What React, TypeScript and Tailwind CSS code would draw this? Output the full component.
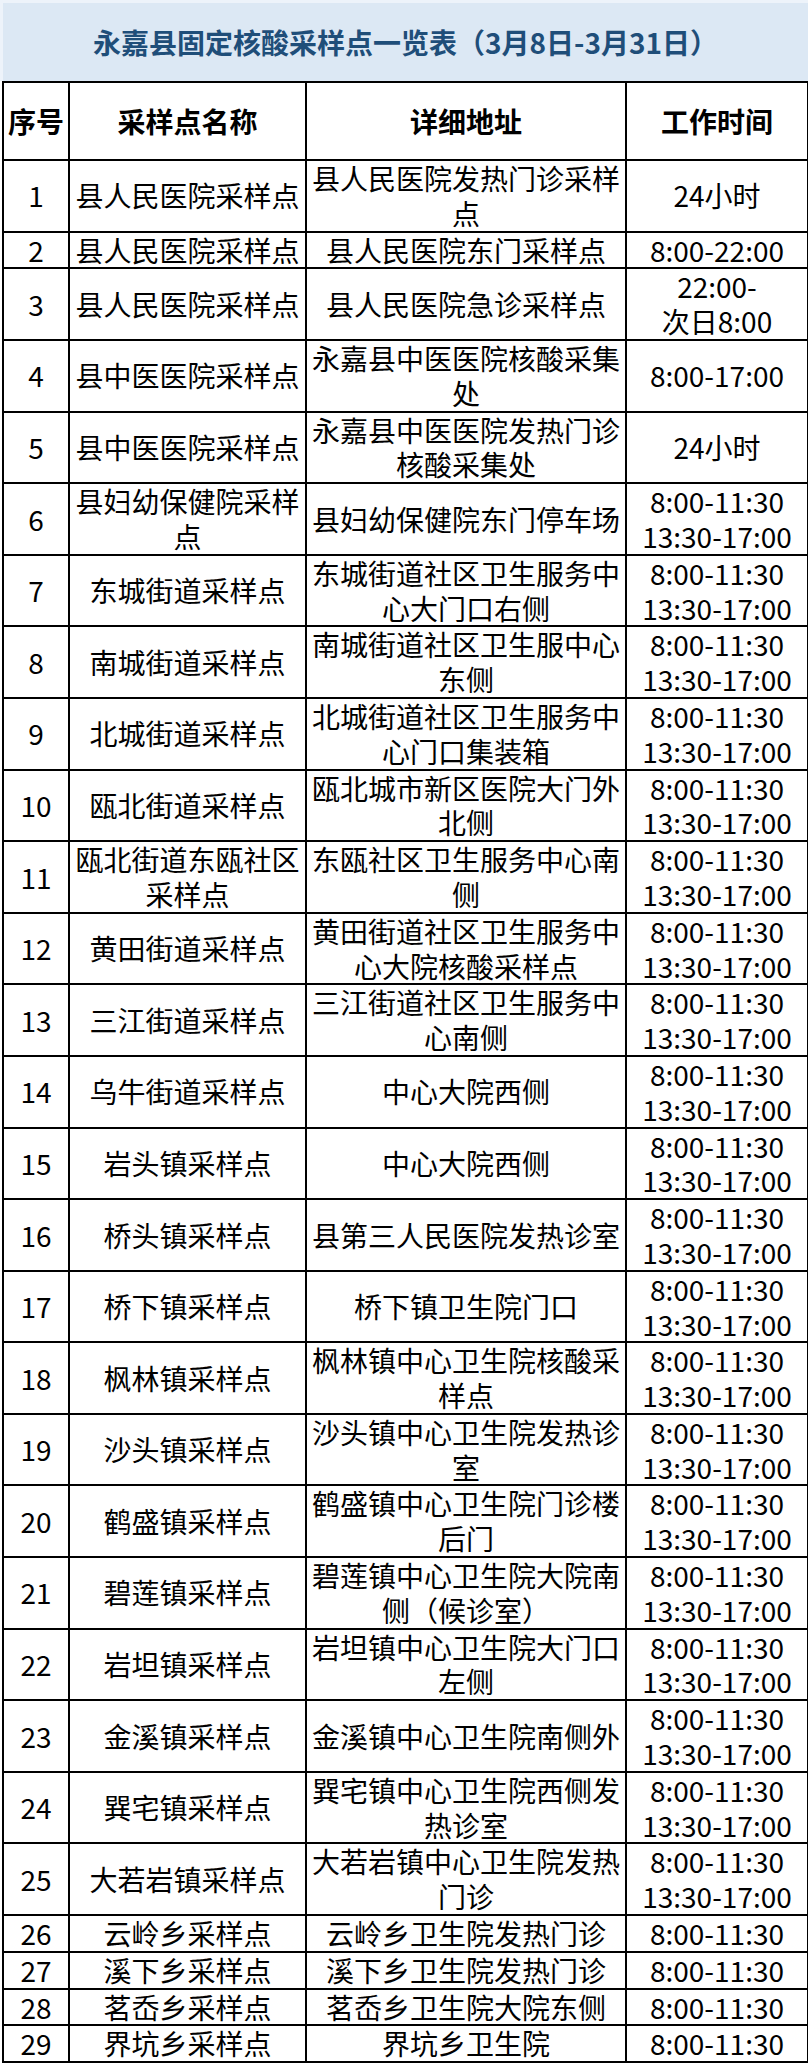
import React from 'react';

type Row = {
  no: number;
  name: string;
  addr: string;
  time: string[];
};

const split = ['8:00-11:30', '13:30-17:00'];

const rows: Row[] = [
  { no: 1, name: '县人民医院采样点', addr: '县人民医院发热门诊采样点', time: ['24小时'] },
  { no: 2, name: '县人民医院采样点', addr: '县人民医院东门采样点', time: ['8:00-22:00'] },
  { no: 3, name: '县人民医院采样点', addr: '县人民医院急诊采样点', time: ['22:00-', '次日8:00'] },
  { no: 4, name: '县中医医院采样点', addr: '永嘉县中医医院核酸采集处', time: ['8:00-17:00'] },
  { no: 5, name: '县中医医院采样点', addr: '永嘉县中医医院发热门诊核酸采集处', time: ['24小时'] },
  { no: 6, name: '县妇幼保健院采样点', addr: '县妇幼保健院东门停车场', time: split },
  { no: 7, name: '东城街道采样点', addr: '东城街道社区卫生服务中心大门口右侧', time: split },
  { no: 8, name: '南城街道采样点', addr: '南城街道社区卫生服中心东侧', time: split },
  { no: 9, name: '北城街道采样点', addr: '北城街道社区卫生服务中心门口集装箱', time: split },
  { no: 10, name: '瓯北街道采样点', addr: '瓯北城市新区医院大门外北侧', time: split },
  { no: 11, name: '瓯北街道东瓯社区采样点', addr: '东瓯社区卫生服务中心南侧', time: split },
  { no: 12, name: '黄田街道采样点', addr: '黄田街道社区卫生服务中心大院核酸采样点', time: split },
  { no: 13, name: '三江街道采样点', addr: '三江街道社区卫生服务中心南侧', time: split },
  { no: 14, name: '乌牛街道采样点', addr: '中心大院西侧', time: split },
  { no: 15, name: '岩头镇采样点', addr: '中心大院西侧', time: split },
  { no: 16, name: '桥头镇采样点', addr: '县第三人民医院发热诊室', time: split },
  { no: 17, name: '桥下镇采样点', addr: '桥下镇卫生院门口', time: split },
  { no: 18, name: '枫林镇采样点', addr: '枫林镇中心卫生院核酸采样点', time: split },
  { no: 19, name: '沙头镇采样点', addr: '沙头镇中心卫生院发热诊室', time: split },
  { no: 20, name: '鹤盛镇采样点', addr: '鹤盛镇中心卫生院门诊楼后门', time: split },
  { no: 21, name: '碧莲镇采样点', addr: '碧莲镇中心卫生院大院南侧（候诊室）', time: split },
  { no: 22, name: '岩坦镇采样点', addr: '岩坦镇中心卫生院大门口左侧', time: split },
  { no: 23, name: '金溪镇采样点', addr: '金溪镇中心卫生院南侧外', time: split },
  { no: 24, name: '巽宅镇采样点', addr: '巽宅镇中心卫生院西侧发热诊室', time: split },
  { no: 25, name: '大若岩镇采样点', addr: '大若岩镇中心卫生院发热门诊', time: split },
  { no: 26, name: '云岭乡采样点', addr: '云岭乡卫生院发热门诊', time: ['8:00-11:30'] },
  { no: 27, name: '溪下乡采样点', addr: '溪下乡卫生院发热门诊', time: ['8:00-11:30'] },
  { no: 28, name: '茗岙乡采样点', addr: '茗岙乡卫生院大院东侧', time: ['8:00-11:30'] },
  { no: 29, name: '界坑乡采样点', addr: '界坑乡卫生院', time: ['8:00-11:30'] },
];

const cell = 'border-2 border-black text-center align-middle p-0 px-[1px]';

const App = () => {
  return (
    <div
      className="w-[808px] bg-white text-black"
      style={{ fontFamily: '"Noto Sans CJK SC", "Noto Sans", sans-serif' }}
    >
      {/* Title */}
      <div className="h-[81px] flex items-center justify-center bg-[#dce8f4] border-t-[3px] border-l-[3px] border-[#edf3fa]">
        <h1 className="text-[28px] leading-none font-bold text-[#1f4e79]">
          永嘉县固定核酸采样点一览表（3月8日-3月31日）
        </h1>
      </div>

      {/* Table */}
      <table className="ml-[2px] w-[805px] table-fixed border-collapse text-[28px] leading-[34.8px]">
        <colgroup>
          <col className="w-[66px]" />
          <col className="w-[237px]" />
          <col className="w-[320px]" />
          <col className="w-[182px]" />
        </colgroup>
        <thead>
          <tr className="h-[78px] font-bold">
            <th className={cell}>序号</th>
            <th className={cell}>采样点名称</th>
            <th className={cell}>详细地址</th>
            <th className={cell}>工作时间</th>
          </tr>
        </thead>
        <tbody>
          {rows.map((r) => (
            <tr key={r.no}>
              <td className={cell}>{r.no}</td>
              <td className={cell}>{r.name}</td>
              <td className={cell}>{r.addr}</td>
              <td className={cell}>
                {r.time.map((t, i) => (
                  <div key={i} className="whitespace-nowrap">
                    {t}
                  </div>
                ))}
              </td>
            </tr>
          ))}
        </tbody>
      </table>
    </div>
  );
};

export default App;
